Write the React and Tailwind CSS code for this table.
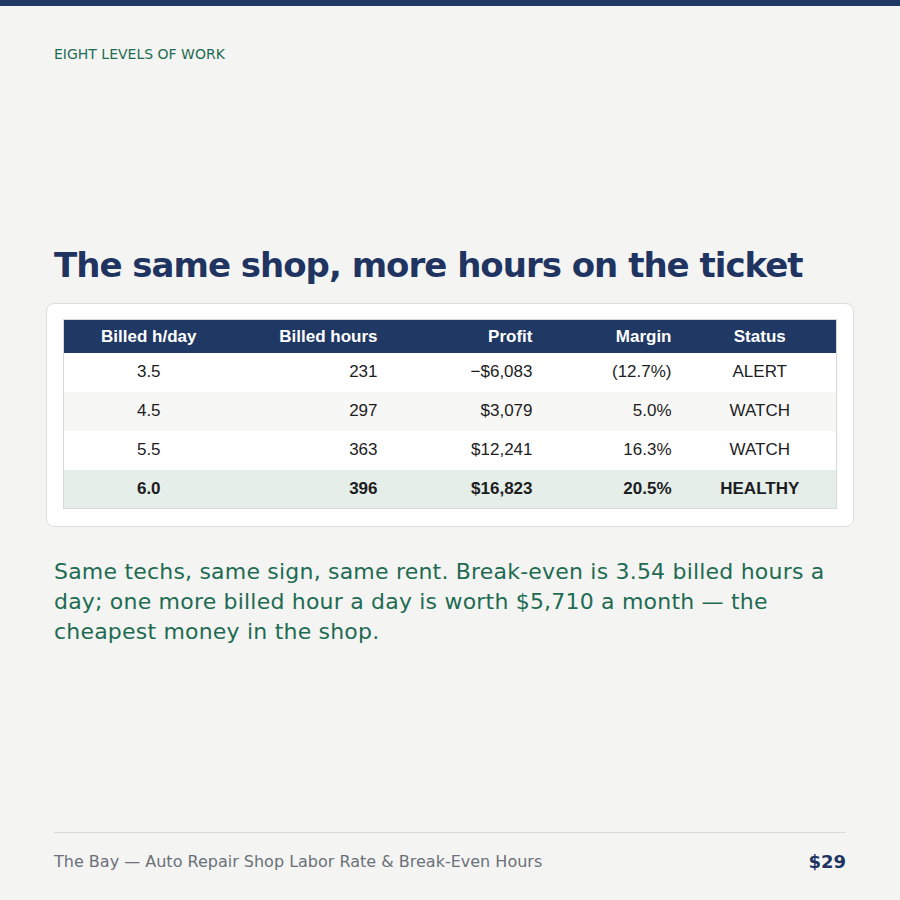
import React from 'react';

const rows = [
  { h: '3.5', hours: '231', profit: '\u2212$6,083', margin: '(12.7%)', status: 'ALERT', bg: 'bg-white' },
  { h: '4.5', hours: '297', profit: '$3,079', margin: '5.0%', status: 'WATCH', bg: 'bg-[#f7f7f5]' },
  { h: '5.5', hours: '363', profit: '$12,241', margin: '16.3%', status: 'WATCH', bg: 'bg-white' },
  { h: '6.0', hours: '396', profit: '$16,823', margin: '20.5%', status: 'HEALTHY', bg: 'bg-[#e5eee8]', bold: true },
];

const App = () => {
  return (
    <div className="w-[900px] h-[900px] bg-[#f4f5f3] flex flex-col font-['DejaVu_Sans',sans-serif]">
      <div className="h-[6px] bg-[#1f3864]" />
      <div className="flex-1 flex flex-col px-[54px]">
        <div className="mt-[39px] text-[14px] leading-[18px] text-[#1e6b52]">
          EIGHT LEVELS OF WORK
        </div>

        <h1 className="mt-[180px] text-[34px] leading-[44px] font-bold text-[#1f3461] tracking-[-1px] whitespace-nowrap">
          The same shop, more hours on the ticket
        </h1>

        <div className="mt-[16px] -mx-[8px] bg-white border border-[#dcdfdb] rounded-[8px] px-[16px] pt-[15px] pb-[17px]">
          <table className="w-full table-fixed border-collapse border border-[#d6d9d5] font-['Liberation_Sans',Arial,sans-serif] text-[17px] text-[#1d1d1f]">
            <colgroup>
              <col className="w-[170px]" />
              <col className="w-[156px]" />
              <col className="w-[155px]" />
              <col className="w-[139px]" />
              <col className="w-[153px]" />
            </colgroup>
            <thead>
              <tr className="bg-[#1f3864] text-white h-[33px]">
                <th className="px-3 text-center font-bold">Billed h/day</th>
                <th className="px-3 text-right font-bold">Billed hours</th>
                <th className="px-3 text-right font-bold">Profit</th>
                <th className="px-3 text-right font-bold">Margin</th>
                <th className="px-3 text-center font-bold">Status</th>
              </tr>
            </thead>
            <tbody>
              {rows.map((r) => (
                <tr key={r.h} className={`${r.bg} h-[39px] ${r.bold ? 'font-bold' : ''}`}>
                  <td className="px-3 text-center">{r.h}</td>
                  <td className="px-3 text-right">{r.hours}</td>
                  <td className="px-3 text-right">{r.profit}</td>
                  <td className="px-3 text-right">{r.margin}</td>
                  <td className="px-3 text-center">{r.status}</td>
                </tr>
              ))}
            </tbody>
          </table>
        </div>

        <p className="mt-[30px] text-[22px] leading-[30px] tracking-[0.2px] text-[#1e6b52]">
          Same techs, same sign, same rent. Break-even is 3.54 billed hours a day; one more billed hour a day is worth $5,710 a month — the cheapest money in the shop.
        </p>

        <div className="mt-auto mb-[25px]">
          <div className="border-t border-[#d9dbd8] pt-[15px] flex items-center justify-between">
            <span className="text-[16px] text-[#6b7079]">The Bay — Auto Repair Shop Labor Rate &amp; Break-Even Hours</span>
            <span className="text-[18px] font-bold text-[#1f3461]">$29</span>
          </div>
        </div>
      </div>
    </div>
  );
};

export default App;
